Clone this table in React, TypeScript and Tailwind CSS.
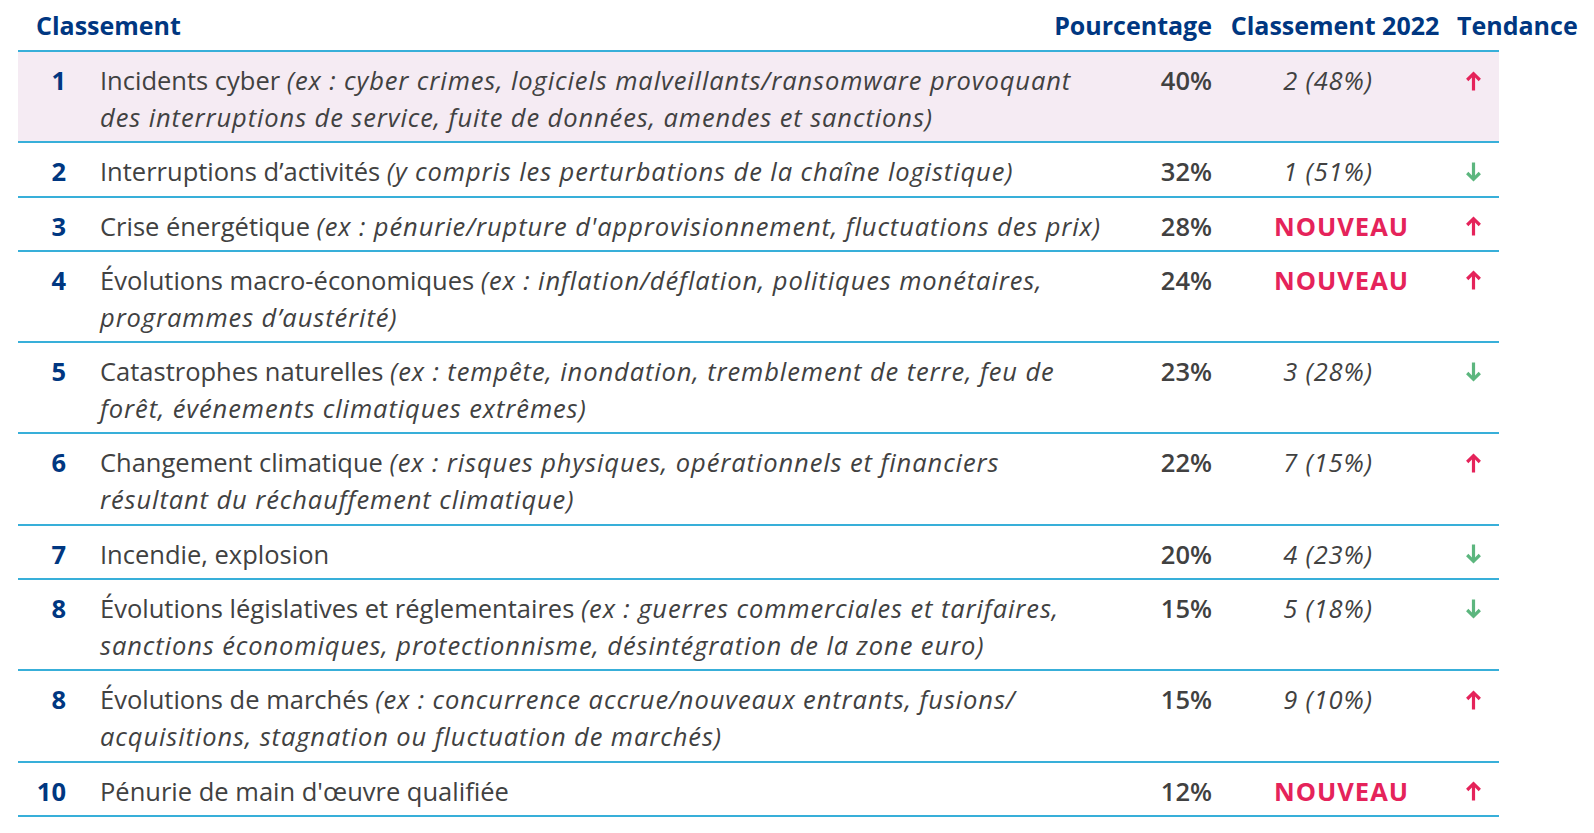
import { ReactNode } from "react";

type Row = {
  rank: string;
  label: string;
  note?: ReactNode;
  pct: string;
  prev: string;
  up: boolean;
  highlight?: boolean;
};

const rows: Row[] = [
  {
    rank: "1",
    label: "Incidents cyber ",
    note: (
      <>
        (ex : cyber crimes, logiciels malveillants/ransomware provoquant
        <br />
        des interruptions de service, fuite de données, amendes et sanctions)
      </>
    ),
    pct: "40%",
    prev: "2 (48%)",
    up: true,
    highlight: true,
  },
  {
    rank: "2",
    label: "Interruptions d’activités ",
    note: "(y compris les perturbations de la chaîne logistique)",
    pct: "32%",
    prev: "1 (51%)",
    up: false,
  },
  {
    rank: "3",
    label: "Crise énergétique ",
    note: "(ex : pénurie/rupture d'approvisionnement, fluctuations des prix)",
    pct: "28%",
    prev: "NOUVEAU",
    up: true,
  },
  {
    rank: "4",
    label: "Évolutions macro-économiques ",
    note: (
      <>
        (ex : inflation/déflation, politiques monétaires,
        <br />
        programmes d’austérité)
      </>
    ),
    pct: "24%",
    prev: "NOUVEAU",
    up: true,
  },
  {
    rank: "5",
    label: "Catastrophes naturelles ",
    note: (
      <>
        (ex : tempête, inondation, tremblement de terre, feu de
        <br />
        forêt, événements climatiques extrêmes)
      </>
    ),
    pct: "23%",
    prev: "3 (28%)",
    up: false,
  },
  {
    rank: "6",
    label: "Changement climatique ",
    note: (
      <>
        (ex : risques physiques, opérationnels et financiers
        <br />
        résultant du réchauffement climatique)
      </>
    ),
    pct: "22%",
    prev: "7 (15%)",
    up: true,
  },
  { rank: "7", label: "Incendie, explosion", pct: "20%", prev: "4 (23%)", up: false },
  {
    rank: "8",
    label: "Évolutions législatives et réglementaires ",
    note: (
      <>
        (ex : guerres commerciales et tarifaires,
        <br />
        sanctions économiques, protectionnisme, désintégration de la zone euro)
      </>
    ),
    pct: "15%",
    prev: "5 (18%)",
    up: false,
  },
  {
    rank: "8",
    label: "Évolutions de marchés ",
    note: (
      <>
        (ex : concurrence accrue/nouveaux entrants, fusions/
        <br />
        acquisitions, stagnation ou fluctuation de marchés)
      </>
    ),
    pct: "15%",
    prev: "9 (10%)",
    up: true,
  },
  { rank: "10", label: "Pénurie de main d'œuvre qualifiée", pct: "12%", prev: "NOUVEAU", up: true },
];

const Arrow = ({ up }: { up: boolean }) => (
  <svg
    width="17"
    height="20"
    viewBox="0 0 17 20"
    fill="none"
    stroke={up ? "#e5235a" : "#5cb67e"}
    strokeWidth="3.2"
    className={up ? "" : "rotate-180"}
  >
    <path d="M8.5 19.5V2.8" />
    <path d="M2.2 9L8.5 2.7L14.8 9" />
  </svg>
);

export default function App() {
  return (
    <div className="min-h-screen bg-white pl-[18px] text-[#414141]" style={{ fontFamily: "'Open Sans', Lato, sans-serif" }}>
      <div className="w-[1481px]">
        <div className="flex h-[52px] items-center border-b-2 border-[#38afd9] pt-[2px] text-[25px] font-bold text-[#003781]">
          <div className="min-w-0 flex-1 whitespace-nowrap pl-[18px]">Classement</div>
          <div className="w-[170px] whitespace-nowrap text-right">Pourcentage</div>
          <div className="w-[235px] whitespace-nowrap pl-[11px] text-center">Classement 2022</div>
          <div className="w-[52px] whitespace-nowrap pl-[10px]">Tendance</div>
        </div>

        {rows.map((r, i) => (
          <div
            key={i}
            className={`flex border-b-2 border-[#38afd9] pt-[10px] pb-[5.3px] text-[25.5px] leading-[37px] ${
              r.highlight ? "bg-[#f5ebf3]" : ""
            }`}
          >
            <div className="w-[48px] shrink-0 text-right font-bold text-[#003781]">{r.rank}</div>
            <div className="min-w-0 flex-1 whitespace-nowrap pl-[34px]">
              {r.label}
              {r.note && <span className="italic tracking-[0.9px]">{r.note}</span>}
            </div>
            <div className="w-[170px] shrink-0 text-right font-semibold">{r.pct}</div>
            {r.prev === "NOUVEAU" ? (
              <div className="w-[235px] shrink-0 pl-[24px] text-center font-bold tracking-[1px] text-[#e5235a]">
                {r.prev}
              </div>
            ) : (
              <div className="w-[235px] shrink-0 pr-[3px] text-center italic tracking-[0.85px]">{r.prev}</div>
            )}
            <div className="flex h-[37px] w-[52px] shrink-0 items-center justify-center">
              <Arrow up={r.up} />
            </div>
          </div>
        ))}
      </div>
    </div>
  );
}
